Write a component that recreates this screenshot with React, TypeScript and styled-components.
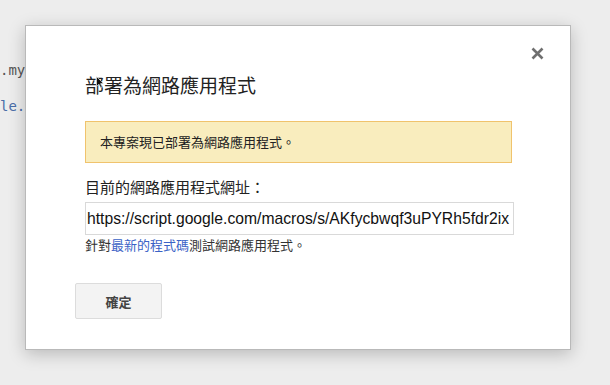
import React from "react";
import styled, { createGlobalStyle } from "styled-components";

const Global = createGlobalStyle`
  html, body { margin: 0; padding: 0; }
  body {
    width: 610px;
    height: 385px;
    overflow: hidden;
    background: #e6e6e6;
    font-family: "Noto Sans CJK TC", "Noto Sans", Arial, sans-serif;
  }
`;

const Page = styled.div`
  position: relative;
  width: 610px;
  height: 385px;
  background: #e6e6e6;
  overflow: hidden;
`;

const Code = styled.pre`
  margin: 0;
  padding: 61px 0 0 0;
  font-family: "DejaVu Sans Mono", "Liberation Mono", monospace;
  font-size: 14px;
  line-height: 18px;
  background: #ededed;
  height: 100%;
  box-sizing: border-box;
`;

const CodeLine = styled.div<{ $tone: "plain" | "ident" }>`
  height: 18px;
  color: ${(p) => (p.$tone === "ident" ? "#4a6ea8" : "#555")};
  white-space: pre;
`;

const Dialog = styled.div`
  position: absolute;
  left: 25px;
  top: 25px;
  width: 546px;
  height: 325px;
  box-sizing: border-box;
  background: #fff;
  border: 1px solid #b9b9b9;
  box-shadow: 0 4px 16px rgba(0, 0, 0, 0.22);
  padding: 47px 0 0 59px;
  display: flex;
  flex-direction: column;
  align-items: flex-start;
`;

const CloseButton = styled.button`
  position: absolute;
  right: 24px;
  top: 18px;
  width: 18px;
  height: 18px;
  padding: 0;
  border: none;
  background: transparent;
  display: flex;
  align-items: center;
  justify-content: center;
  cursor: pointer;
`;

const Title = styled.h2`
  margin: 0;
  font-size: 19px;
  line-height: 24px;
  font-weight: 400;
  color: #222;
`;

const Notice = styled.div`
  margin-top: 24px;
  width: 427px;
  height: 42px;
  box-sizing: border-box;
  background: #f9edbe;
  border: 1px solid #f0c36d;
  padding: 0 14px;
  font-size: 13px;
  line-height: 40px;
  color: #222;
`;

const Label = styled.div`
  margin-top: 14px;
  font-size: 15px;
  line-height: 20px;
  color: #222;
`;

const UrlInput = styled.input`
  margin-top: 5px;
  width: 429px;
  height: 33px;
  box-sizing: border-box;
  border: 1px solid #d9d9d9;
  padding: 0 0 0 1px;
  font-family: "Liberation Sans", Arial, sans-serif;
  font-size: 15.7px;
  color: #111;
  background: #fff;
  outline: none;
`;

const Hint = styled.div`
  margin-top: 2px;
  font-size: 13px;
  line-height: 16px;
  color: #333;
`;

const Link = styled.a`
  color: #3a62c6;
  text-decoration: none;
`;

const ButtonRow = styled.div`
  margin-top: 30px;
  margin-left: -10px;
  display: flex;
  gap: 10px;
`;

const Button = styled.button`
  width: 87px;
  height: 36px;
  box-sizing: border-box;
  background: #f3f3f3;
  border: 1px solid #dcdcdc;
  border-radius: 2px;
  font-family: "Noto Sans CJK TC", sans-serif;
  font-size: 13px;
  font-weight: 700;
  color: #444;
  cursor: pointer;
`;

const Pointer = styled.svg`
  position: absolute;
  left: 96px;
  top: 76px;
`;

export default function App() {
  return (
    <Page>
      <Global />
      <Code>
        <CodeLine $tone="plain">.myFunction();</CodeLine>
        <CodeLine $tone="plain"> </CodeLine>
        <CodeLine $tone="ident">le.log(result);</CodeLine>
      </Code>
      <Dialog role="dialog">
        <CloseButton aria-label="關閉">
          <svg width="13" height="13" viewBox="0 0 13 13">
            <path d="M1.5 1.5 L11.5 11.5 M11.5 1.5 L1.5 11.5" stroke="#6f6f6f" strokeWidth="2.6" />
          </svg>
        </CloseButton>
        <Title>部署為網路應用程式</Title>
        <Notice>本專案現已部署為網路應用程式。</Notice>
        <Label>目前的網路應用程式網址：</Label>
        <UrlInput readOnly value="https://script.google.com/macros/s/AKfycbwqf3uPYRh5fdr2ix" />
        <Hint>
          針對<Link href="#">最新的程式碼</Link>測試網路應用程式。
        </Hint>
        <ButtonRow>
          <Button>確定</Button>
        </ButtonRow>
      </Dialog>
      <Pointer width="8" height="13" viewBox="0 0 8 13">
        <path d="M0.5 0.5 L0.5 10.5 L3 8.2 L4.8 12 L6.2 11.3 L4.5 7.6 L7.5 7.6 Z" fill="#111" stroke="#fff" strokeWidth="0.6" />
      </Pointer>
    </Page>
  );
}
